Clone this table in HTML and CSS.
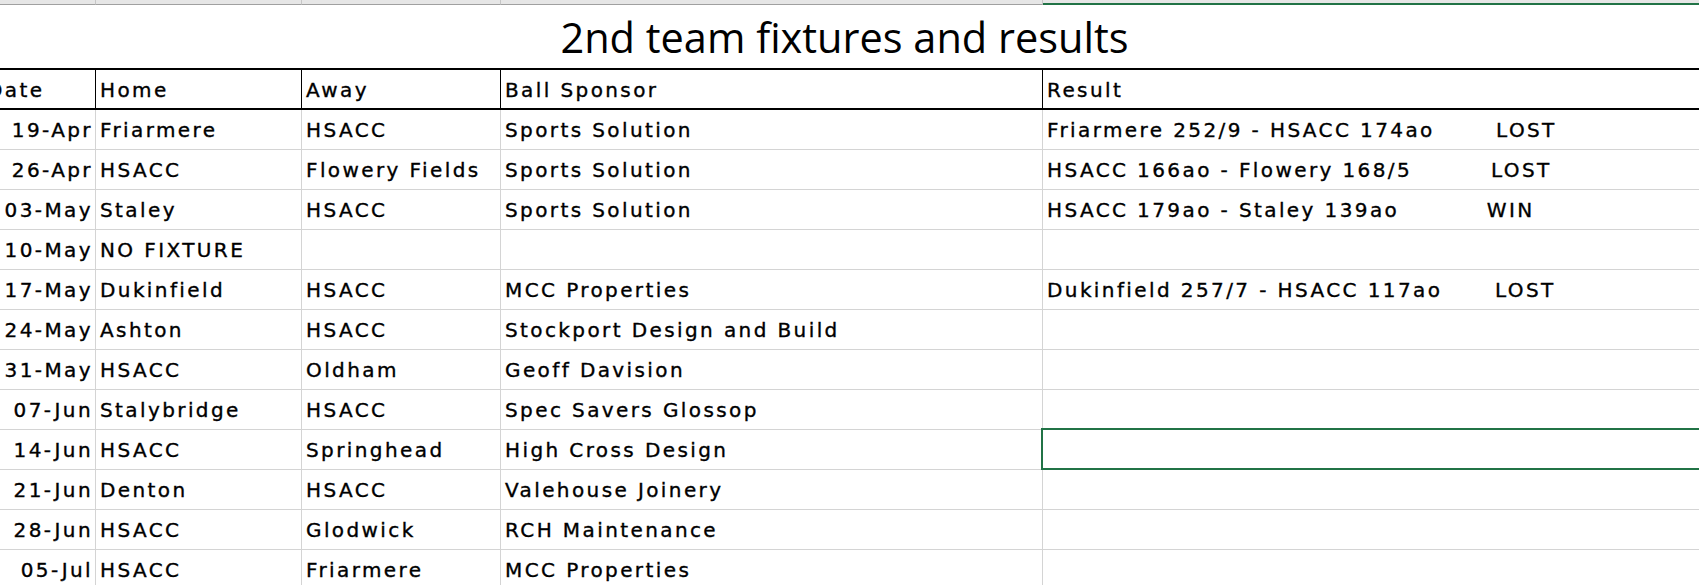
FILE: index.html
```
<!DOCTYPE html>
<html>
<head>
<meta charset="utf-8">
<title>2nd team fixtures and results</title>
<link rel="stylesheet" href="styles.css">
</head>
<body>
<div class="sheet">
  <div class="colheads">
    <div class="ch"></div><div class="ch"></div><div class="ch"></div><div class="ch"></div><div class="ch ch-sel"></div>
  </div>
  <div class="title">2nd team fixtures and results</div>
  <div class="grid">
    <div class="c hd">Date</div><div class="c hd">Home</div><div class="c hd">Away</div><div class="c hd">Ball Sponsor</div><div class="c hd last">Result</div>

    <div class="c date">19-Apr</div><div class="c">Friarmere</div><div class="c">HSACC</div><div class="c">Sports Solution</div><div class="c last">Friarmere 252/9 - HSACC 174ao       LOST</div>
    <div class="c date">26-Apr</div><div class="c">HSACC</div><div class="c">Flowery Fields</div><div class="c">Sports Solution</div><div class="c last">HSACC 166ao - Flowery 168/5         LOST</div>
    <div class="c date">03-May</div><div class="c">Staley</div><div class="c">HSACC</div><div class="c">Sports Solution</div><div class="c last">HSACC 179ao - Staley 139ao          WIN</div>
    <div class="c date">10-May</div><div class="c">NO FIXTURE</div><div class="c"></div><div class="c"></div><div class="c last"></div>
    <div class="c date">17-May</div><div class="c">Dukinfield</div><div class="c">HSACC</div><div class="c">MCC Properties</div><div class="c last">Dukinfield 257/7 - HSACC 117ao      LOST</div>
    <div class="c date">24-May</div><div class="c">Ashton</div><div class="c">HSACC</div><div class="c">Stockport Design and Build</div><div class="c last"></div>
    <div class="c date">31-May</div><div class="c">HSACC</div><div class="c">Oldham</div><div class="c">Geoff Davision</div><div class="c last"></div>
    <div class="c date">07-Jun</div><div class="c">Stalybridge</div><div class="c">HSACC</div><div class="c">Spec Savers Glossop</div><div class="c last"></div>
    <div class="c date">14-Jun</div><div class="c">HSACC</div><div class="c">Springhead</div><div class="c">High Cross Design</div><div class="c last cur"><div class="sel"></div></div>
    <div class="c date">21-Jun</div><div class="c">Denton</div><div class="c">HSACC</div><div class="c">Valehouse Joinery</div><div class="c last"></div>
    <div class="c date">28-Jun</div><div class="c">HSACC</div><div class="c">Glodwick</div><div class="c">RCH Maintenance</div><div class="c last"></div>
    <div class="c date">05-Jul</div><div class="c">HSACC</div><div class="c">Friarmere</div><div class="c">MCC Properties</div><div class="c last"></div>
  </div>
</div>
</body>
</html>
```
FILE: styles.css
```
html, body {
  margin: 0;
  padding: 0;
  background: #fff;
}
body {
  width: 1699px;
  height: 585px;
  overflow: hidden;
}
.sheet {
  width: 1699px;
  height: 585px;
  overflow: hidden;
}
.colheads,
.grid {
  display: grid;
  grid-template-columns: 113px 206px 199px 542px 1fr;
  margin-left: -17px;
  width: 1716px;
}
.ch {
  height: 5px;
  box-sizing: border-box;
  background: #e6e6e6;
  border-right: 1px solid #c6c6c6;
  border-bottom: 1px solid #a0a0a0;
}
.ch-sel {
  border-right: none;
  border-bottom: 2px solid #217346;
}
.title {
  height: 63px;
  box-sizing: border-box;
  padding: 4px 10px 0 0;
  text-align: center;
  font: 400 41.5px/56px "Open Sans", sans-serif;
  color: #000;
}
.c {
  height: 40px;
  box-sizing: border-box;
  border-right: 1px solid #d4d4d4;
  border-bottom: 1px solid #d4d4d4;
  display: flex;
  align-items: flex-end;
  padding: 0 4px 7px;
  font: 20px/24px "DejaVu Sans", sans-serif;
  letter-spacing: 2.4px;
  -webkit-text-stroke: 0.35px #000;
  white-space: pre;
  overflow: hidden;
  color: #000;
}
.c.hd {
  height: 42px;
  padding-bottom: 6px;
  border-top: 2px solid #000;
  border-bottom: 2px solid #000;
  border-right-color: #000;
}
.c.last {
  border-right: none;
}
.c.date {
  justify-content: flex-end;
  padding-right: 2px;
}
.c.cur {
  position: relative;
  overflow: visible;
}
.sel {
  position: absolute;
  top: -2px;
  left: -2px;
  right: -20px;
  bottom: -1px;
  border: 2px solid #217346;
}
```
